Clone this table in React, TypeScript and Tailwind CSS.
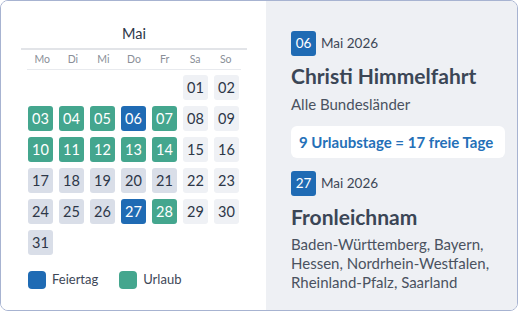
const FONT = "font-['Lato','Noto_Sans',sans-serif]";

type Kind = 'holiday' | 'vacation' | 'weekday' | 'weekend';

const dayLabels = ['Mo', 'Di', 'Mi', 'Do', 'Fr', 'Sa', 'So'];

const holidays = [6, 27];
const vacation = [3, 4, 5, 7, 10, 11, 12, 13, 14, 28];

function kindFor(day: number, col: number): Kind {
  if (holidays.includes(day)) return 'holiday';
  if (vacation.includes(day)) return 'vacation';
  if (col >= 5) return 'weekend';
  return 'weekday';
}

const cellStyles: Record<Kind, string> = {
  holiday: 'bg-[#1f6bb4] text-white',
  vacation: 'bg-[#44a68e] text-white',
  weekday: 'bg-[#d9dee8] text-[#2d3748]',
  weekend: 'bg-[#eff1f5] text-[#2d3748]',
};

function Calendar() {
  const offset = 5;
  const cells: { day: number | null; col: number }[] = [];
  for (let i = 0; i < offset; i++) cells.push({ day: null, col: i });
  for (let d = 1; d <= 31; d++) cells.push({ day: d, col: (offset + d - 1) % 7 });

  return (
    <div className="w-[265px] shrink-0 bg-white pl-[20px] pr-[19px] pt-[23px]">
      <div className="h-[26px] border-b-2 border-[#e2e4e8] text-center text-[14.5px] leading-[20px] text-[#2d3748]">
        Mai
      </div>
      <div className="mx-[6px] grid h-[20px] grid-cols-7 border-b border-[#e8eaee] text-center text-[10.5px] leading-[19px] text-[#8a8f98]">
        {dayLabels.map((l) => (
          <span key={l}>{l}</span>
        ))}
      </div>
      <div className="mx-[7px] mt-[5px] grid grid-cols-[repeat(7,25px)] gap-[6px]">
        {cells.map((c, i) =>
          c.day === null ? (
            <div key={i} className="h-[25px]" />
          ) : (
            <div
              key={i}
              className={`flex h-[25px] items-center justify-center rounded-[3px] text-[14.5px] ${cellStyles[kindFor(c.day, c.col)]}`}
            >
              {String(c.day).padStart(2, '0')}
            </div>
          ),
        )}
      </div>
      <div className="mx-[7px] mt-[15px] flex items-center text-[13px] text-[#3d4757]">
        <span className="h-[18px] w-[18px] rounded-[4px] bg-[#1f6bb4]" />
        <span className="ml-[6px]">Feiertag</span>
        <span className="ml-[21px] h-[18px] w-[18px] rounded-[4px] bg-[#44a68e]" />
        <span className="ml-[6px]">Urlaub</span>
      </div>
    </div>
  );
}

function DateBadge({ day }: { day: string }) {
  return (
    <div className="flex items-center">
      <span className="flex h-[25px] w-[25px] items-center justify-center rounded-[3px] bg-[#1f6bb4] text-[13.5px] text-white">
        {day}
      </span>
      <span className="ml-[5px] text-[13.5px] text-[#3d4757]">Mai 2026</span>
    </div>
  );
}

export default function App() {
  return (
    <div className={`${FONT} h-[311px] w-[518px] bg-white`}>
      <div className="flex h-full w-full overflow-hidden rounded-lg border border-[#a7b3d1]">
        <Calendar />
        <div className="flex-1 bg-[#eef0f4] pl-[25px] pr-[12px] pt-[30px]">
          <DateBadge day="06" />
          <h2 className="mt-[7px] text-[21px] font-bold leading-[26px] text-[#3b4656]">
            Christi Himmelfahrt
          </h2>
          <p className="mt-[5px] text-[15px] leading-[20px] text-[#4a5260]">Alle Bundesländer</p>
          <div className="mt-[12px] flex h-[32px] items-center rounded-md bg-white px-[8px] text-[15px] font-bold text-[#2470b8]">
            9 Urlaubstage = 17 freie Tage
          </div>
          <div className="mt-[13px]">
            <DateBadge day="27" />
          </div>
          <h2 className="mt-[8px] text-[21px] font-bold leading-[26px] text-[#3b4656]">
            Fronleichnam
          </h2>
          <p className="mt-[5px] text-[15px] leading-[19px] text-[#4a5260]">
            Baden-Württemberg, Bayern, Hessen, Nordrhein-Westfalen, Rheinland-Pfalz, Saarland
          </p>
        </div>
      </div>
    </div>
  );
}
